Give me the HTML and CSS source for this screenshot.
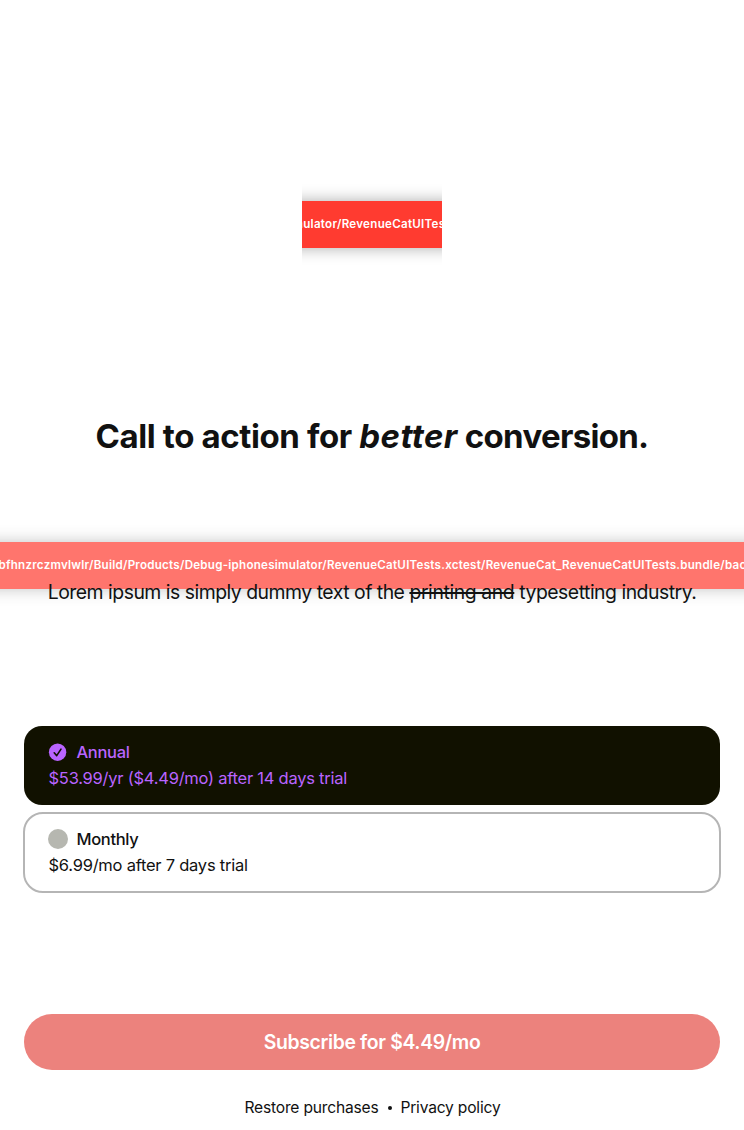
FILE: index.html
```html
<!DOCTYPE html>
<html lang="en">
<head>
<meta charset="utf-8">
<title>Paywall</title>
<link rel="stylesheet" href="styles.css">
</head>
<body>
<main class="paywall">
  <div class="icon-slot">
    <div class="banner"><span class="path path-icon">mulator/RevenueCatUITes</span></div>
  </div>
  <h1 class="title"><span class="title-lead">Call to action for </span><em>better</em><span class="title-end"> conversion.</span></h1>
  <section class="subtitle-area">
    <div class="background-slot">
      <div class="banner"><span class="path path-background">bfhnzrczmvlwlr/Build/Products/Debug-iphonesimulator/RevenueCatUITests.xctest/RevenueCat_RevenueCatUITests.bundle/bac</span></div>
    </div>
    <p class="subtitle">Lorem ipsum is simply dummy text of the <s>printing and</s> typesetting industry.</p>
  </section>
  <section class="packages">
    <div class="package selected">
      <div class="package-head">
        <svg class="mark" viewBox="0 0 20 20"><circle cx="9.6" cy="10.2" r="8.7" fill="#b964ff"/><path d="M6.2 10.8 8.7 13.6 13 7.1" fill="none" stroke="#111100" stroke-width="1.6" stroke-linecap="round" stroke-linejoin="round"/></svg>
        <span class="name">Annual</span>
      </div>
      <div class="offer">$53.99/yr ($4.49/mo) after 14 days trial</div>
    </div>
    <div class="package">
      <div class="package-head">
        <svg class="mark" viewBox="0 0 20 20"><circle cx="10" cy="10" r="10" fill="#b6b7b0"/></svg>
        <span class="name">Monthly</span>
      </div>
      <div class="offer">$6.99/mo after 7 days trial</div>
    </div>
  </section>
  <div class="subscribe">Subscribe for $4.49/mo</div>
  <footer class="footer"><span>Restore purchases</span><i class="dot"></i><span>Privacy policy</span></footer>
</main>
</body>
</html>
```
FILE: styles.css
```css
* { box-sizing: border-box; }
body { margin: 0; background: #fff; color: #111; font-family: Inter, "Liberation Sans", sans-serif; }
.paywall { width: 744px; height: 1130px; display: flex; flex-direction: column; padding-top: 154px; overflow: hidden; }
.icon-slot { width: 140px; height: 140px; margin: 0 auto; padding-top: 47px; overflow: hidden; }
.banner { height: 47px; padding-bottom: 2px; background: #ff3b30; color: #fff; display: flex; align-items: center; justify-content: flex-start; box-shadow: 0 0 15px rgba(0,0,0,.33); white-space: nowrap; margin: 0 -30px; }
.path { font-size: 11.6px; font-weight: 600; line-height: 16px; letter-spacing: .25px; flex: none; }
.path-icon { margin-left: 20.5px; letter-spacing: .28px; }
.path-background { margin-left: 28.5px; }
.title { margin: 120px 0 0; height: 44px; font-size: 33px; line-height: 44px; font-weight: 700; text-align: center; white-space: nowrap; }
.title-lead { letter-spacing: -.39px; }
.title em { letter-spacing: .4px; }
.title-end { letter-spacing: -.68px; }
.subtitle-area { position: relative; margin-top: 122px; height: 24px; }
.background-slot { position: absolute; left: 0; right: 0; top: -38px; opacity: .7; }
.subtitle { position: relative; margin: 0; font-size: 19.4px; line-height: 24px; letter-spacing: -.49px; text-align: center; white-space: nowrap; }
.subtitle s { letter-spacing: -.4px; text-decoration-thickness: 1.5px; }
.packages { margin: 122px 23px 0; display: flex; flex-direction: column; gap: 7px; }
.package { height: 81px; border: 2px solid #b5b5b5; border-radius: 20px; padding: 15px 23px; font-size: 16.5px; letter-spacing: -.24px; white-space: nowrap; }
.package.selected { height: 79px; margin: 0 1px; border: 0; border-radius: 18px; background: #111100; color: #b964ff; padding: 16px 24px; }
.package-head { display: flex; align-items: center; height: 20px; }
.mark { width: 20px; height: 20px; margin-right: 8.5px; }
.name { font-weight: 500; line-height: 20px; letter-spacing: -.33px; }
.offer { line-height: 22px; margin-top: 5px; padding-left: .5px; }
.package:not(.selected) .mark { margin-top: -1px; }
.subscribe { margin: 121px 24px 0; height: 56px; border-radius: 28px; background: #ec827d; color: #fff; font-size: 19.4px; font-weight: 600; letter-spacing: -.35px; line-height: 56px; text-align: center; }
.footer { margin-top: 28px; padding-left: 1px; display: flex; justify-content: center; align-items: center; height: 20px; font-size: 15.6px; letter-spacing: -.2px; line-height: 20px; }
.dot { width: 4px; height: 4px; border-radius: 50%; background: #111; margin: 0 8.5px 0 9.5px; }
```
